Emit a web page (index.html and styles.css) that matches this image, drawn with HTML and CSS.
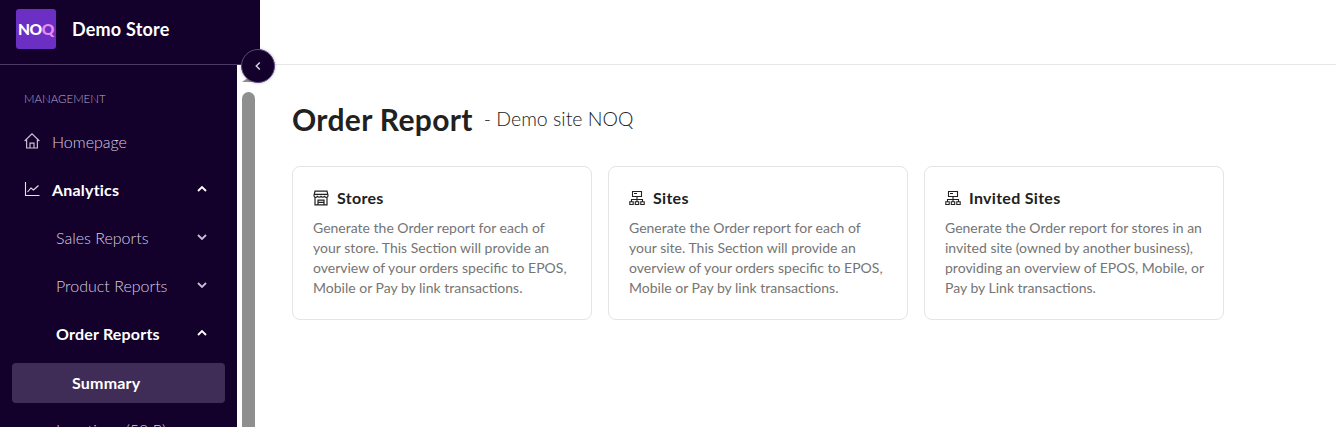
FILE: index.html
```html
<!DOCTYPE html>
<html lang="en">

<head>
  <meta charset="UTF-8">
  <meta name="viewport" content="width=device-width, initial-scale=1.0">
  <title>Order Report</title>
  <link rel="stylesheet" href="styles.css">
</head>

<body>

  <aside class="sidebar">
    <div class="brand">
      <div class="logo"><span class="logo-no">NO</span><span class="logo-q">Q</span></div>
      <span class="brand-name">Demo Store</span>
    </div>
    <button class="collapse-btn" aria-label="Collapse">
      <svg width="12" height="12" viewBox="0 0 12 12"><path d="M7.800 2.500 4.300 6l3.500 3.500" fill="none" stroke="#d8d0e2" stroke-width="1.500"/></svg>
    </button>
    <div class="sidebar-body">
      <nav class="nav">
        <div class="nav-heading">MANAGEMENT</div>
        <a class="nav-item">
          <svg class="nav-icon" viewBox="0 0 16 16" fill="none" stroke="#c9bfd6" stroke-width="1.200"><path d="M.6 8 8 .9 15.400 8M2.600 6.200V15h10.800V6.200M6 15v-4.800h4V15"/></svg>
          <span>Homepage</span>
        </a>
        <a class="nav-item active">
          <svg class="nav-icon" viewBox="0 0 16 16" fill="none" stroke="#e6e0ee" stroke-width="1.100"><path d="M1.500 1v13.500h14M3.500 11l3.500-4 2.500 2 5-4.500"/></svg>
          <span>Analytics</span>
          <svg class="chevron" viewBox="0 0 10 6"><path d="M1 5l4-4 4 4" fill="none" stroke="#fff" stroke-width="1.800"/></svg>
        </a>
        <a class="nav-item sub">
          <span>Sales Reports</span>
          <svg class="chevron" viewBox="0 0 10 6"><path d="M1 1l4 4 4-4" fill="none" stroke="#c9bfd6" stroke-width="1.800"/></svg>
        </a>
        <a class="nav-item sub">
          <span>Product Reports</span>
          <svg class="chevron" viewBox="0 0 10 6"><path d="M1 1l4 4 4-4" fill="none" stroke="#c9bfd6" stroke-width="1.800"/></svg>
        </a>
        <a class="nav-item sub active">
          <span>Order Reports</span>
          <svg class="chevron" viewBox="0 0 10 6"><path d="M1 5l4-4 4 4" fill="none" stroke="#fff" stroke-width="1.800"/></svg>
        </a>
        <a class="nav-leaf selected">Summary</a>
        <a class="nav-leaf plain">Locations (52 P)</a>
      </nav>
      <div class="scrollbar">
        <div class="scroll-arrow"></div>
        <div class="scroll-thumb"></div>
      </div>
    </div>
  </aside>

  <div class="main">
    <header class="topbar"></header>
    <section class="content">
      <div class="page-title">
        <h1>Order Report</h1>
        <span class="subtitle">- Demo site NOQ</span>
      </div>
      <div class="cards">
        <div class="card">
          <h3>
            <svg class="card-icon" viewBox="0 0 16 16" fill="none" stroke="#212121" stroke-width="1.200"><path d="M2 1.200h12l1 4.200a1.700 1.700 0 0 1-3.500.4 1.800 1.800 0 0 1-3.500 0 1.800 1.800 0 0 1-3.500 0A1.700 1.700 0 0 1 1 5.400zM1 4.400h14M2 7.500v7.300h12V7.500M5 14.800v-4.600h6v4.600M5 12.400h6"/></svg>
            Stores
          </h3>
          <p>Generate the Order report for each of your store. This Section will provide an overview of your orders specific to EPOS, Mobile or Pay by link transactions.</p>
        </div>
        <div class="card">
          <h3>
            <svg class="card-icon" viewBox="0 0 16 16" fill="none" stroke="#212121" stroke-width="1.100"><path d="M3.500 1.500h9v5h-9zM5 3.500h3M8 6.500v3M2.500 11.500V9.500h11v2M8 9.500v2M.8 11.800h3.400v2.700H.8zM6.300 11.800h3.400v2.700H6.300zM11.800 11.800h3.400v2.700h-3.400z"/></svg>
            Sites
          </h3>
          <p>Generate the Order report for each of your site. This Section will provide an overview of your orders specific to EPOS, Mobile or Pay by link transactions.</p>
        </div>
        <div class="card">
          <h3>
            <svg class="card-icon" viewBox="0 0 16 16" fill="none" stroke="#212121" stroke-width="1.100"><path d="M3.500 1.500h9v5h-9zM5 3.500h3M8 6.500v3M2.500 11.500V9.500h11v2M8 9.500v2M.8 11.800h3.400v2.700H.8zM6.300 11.800h3.400v2.700H6.300zM11.800 11.800h3.400v2.700h-3.400z"/></svg>
            Invited Sites
          </h3>
          <p>Generate the Order report for stores in an invited site (owned by another business), providing an overview of EPOS, Mobile, or Pay by Link transactions.</p>
        </div>
      </div>
    </section>
  </div>

</body>

</html>
```

FILE: styles.css
```css
* {
  box-sizing: border-box;
}

html,
body {
  height: 100%;
}

body {
  display: flex;
  margin: 0;
  overflow: hidden;
  background-color: #fff;
  color: #212121;
  font-family: Lato, "Open Sans", sans-serif;
}

/* sidebar */
.sidebar {
  position: relative;
  display: flex;
  flex-direction: column;
  flex: none;
  width: 260px;
  height: 100%;
}

.brand {
  display: flex;
  align-items: center;
  gap: 16px;
  height: 65px;
  padding: 0 16px 6px;
  background-color: #13012b;
  border-bottom: 1px solid #4b3a68;
}

.logo {
  display: flex;
  align-items: center;
  justify-content: center;
  width: 40px;
  height: 40px;
  border-radius: 3px;
  background-color: #6c2fc4;
  font-size: 15.5px;
  font-weight: 900;
  letter-spacing: -0.3px;
}

.logo-no {
  color: #fff;
}

.logo-q {
  color: #ea8cf2;
}

.brand-name {
  color: #fff;
  font-size: 18px;
  font-weight: 700;
  letter-spacing: 0.2px;
}

.collapse-btn {
  position: absolute;
  top: 49px;
  left: 241px;
  z-index: 2;
  display: flex;
  align-items: center;
  justify-content: center;
  width: 34px;
  height: 34px;
  padding: 0;
  border: 1px solid #5d4a80;
  border-radius: 50%;
  background-color: #13012b;
  box-shadow: 0 0 3px rgba(0, 0, 0, 0.25);
}

.sidebar-body {
  display: flex;
  flex: 1;
  min-height: 0;
}

.nav {
  flex: none;
  width: 237px;
  height: 100%;
  padding: 0 12px;
  overflow: hidden;
  background-color: #13012b;
}

.nav-heading {
  height: 52px;
  padding: 27px 0 0 12px;
  color: #b5a9ca;
  font-size: 11.5px;
  font-weight: 300;
}

.nav-item {
  display: flex;
  align-items: center;
  height: 48px;
  padding: 0 18px 0 12px;
  color: #d6cde2;
  font-size: 16px;
  font-weight: 300;
}

.nav-item.active {
  color: #fff;
  font-weight: 700;
  letter-spacing: 0.2px;
}

.nav-item.sub {
  padding-left: 44px;
}

.nav-item.sub.active {
  margin-bottom: 6px;
}

.nav-icon {
  flex: none;
  width: 16px;
  height: 16px;
  margin-right: 12px;
}

.chevron {
  flex: none;
  width: 10px;
  height: 6px;
  margin-left: auto;
}

.nav-leaf {
  display: flex;
  align-items: center;
  height: 40px;
  color: #d6cde2;
  font-size: 16px;
  font-weight: 300;
}

.nav-leaf.plain {
  padding-left: 44px;
}

.nav-leaf.selected {
  margin-bottom: 6px;
  padding: 0 0 2px 60px;
  border-radius: 4px;
  background-color: #3f2d58;
  color: #fff;
  font-weight: 700;
  letter-spacing: 0.2px;
}

.scrollbar {
  width: 13px;
  height: 100%;
  margin-left: 5px;
  overflow: hidden;
  background-color: #fff;
}

.scroll-arrow {
  width: 0;
  height: 0;
  margin-top: 8px;
  border-right: 13px solid #8f8f8f;
  border-top: 9px solid transparent;
}

.scroll-thumb {
  height: 400px;
  margin-top: 10px;
  border-radius: 7px 7px 0 0;
  background-color: #8f8f8f;
}

/* main */
.main {
  flex: 1;
  min-width: 0;
}

.topbar {
  height: 65px;
  border-bottom: 1px solid #e6e6e6;
}

.content {
  padding: 36px 32px 0;
}

.page-title {
  display: flex;
  align-items: center;
  gap: 11px;
  margin-bottom: 29px;
}

h1 {
  margin: 0;
  font-size: 30px;
  font-weight: 700;
  line-height: 36px;
  letter-spacing: 0.35px;
}

.subtitle {
  font-size: 19.5px;
  font-weight: 300;
  line-height: 36px;
}

.cards {
  display: flex;
  gap: 16px;
}

.card {
  width: 300px;
  height: 154px;
  padding: 19px 18px 19px 20px;
  border: 1px solid #e4e4e4;
  border-radius: 8px;
}

h3 {
  display: flex;
  align-items: center;
  gap: 8px;
  margin: 0 0 8px;
  font-size: 16px;
  font-weight: 700;
  line-height: 24px;
  letter-spacing: 0.3px;
}

.card-icon {
  flex: none;
  width: 16px;
  height: 16px;
}

.card p {
  margin: 0;
  color: #757575;
  font-size: 14px;
  line-height: 20px;
}
```
